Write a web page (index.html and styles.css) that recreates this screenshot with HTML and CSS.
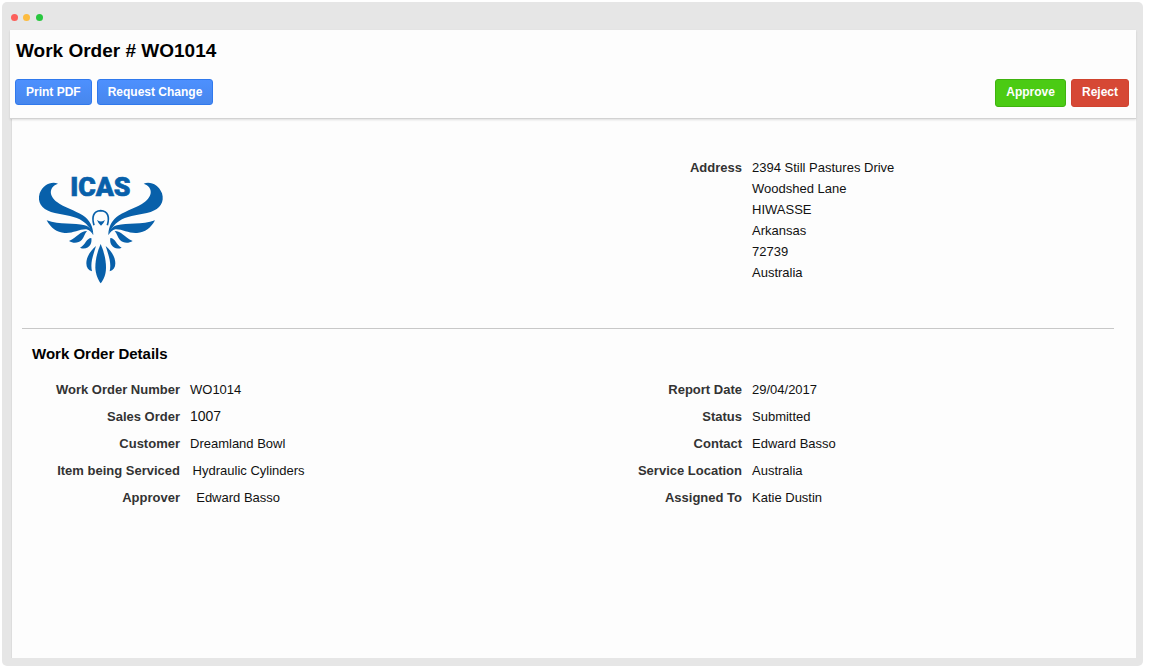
FILE: index.html
```html
<!DOCTYPE html>
<html lang="en">
<head>
<meta charset="UTF-8" />
<meta name="viewport" content="width=device-width, initial-scale=1" />
<title>Work Order # WO1014</title>
<link rel="stylesheet" href="styles.css">
</head>
<body>
  <div class="window">
    <div class="titlebar">
      <span class="dot dot-red"></span>
      <span class="dot dot-yellow"></span>
      <span class="dot dot-green"></span>
    </div>

    <header class="header">
      <h1>Work Order # WO1014</h1>
      <div class="toolbar">
        <button type="button" class="btn btn-blue">Print PDF</button>
        <button type="button" class="btn btn-blue">Request Change</button>
        <button type="button" class="btn btn-green">Approve</button>
        <button type="button" class="btn btn-red">Reject</button>
      </div>
    </header>

    <main class="content">
      <section class="columns summary">
        <svg class="logo" viewBox="0 0 450 390" role="img" aria-label="ICAS">
          <text class="logo-text" x="226" y="94" text-anchor="middle">ICAS</text>
          <g id="wing">
            <path d="M99 56C78 48 54 60 44 85C36 112 50 132 78 141C108 150 142 151 164 163C184 174 195 188 205 209C204 184 194 165 173 151C150 136 117 127 96 111C73 94 69 67 99 56Z" />
            <path d="M65 166C77 189 95 202 119 204C143 206 163 192 184 193C193 194 199 202 205 211C202 195 193 185 179 181C148 173 104 181 65 166Z" />
            <path d="M186 198C166 198 158 216 132 228C145 236 160 235 170 225C178 217 178 206 186 198Z" />
            <path d="M199 219C184 219 182 240 165 248C178 254 190 249 196 239C200 232 200 225 199 219Z" />
            <path d="M213 243C196 258 184 276 184 295C184 308 190 316 201 319C195 292 205 270 213 243Z" />
          </g>
          <use href="#wing" transform="matrix(-1 0 0 1 455 0)" />
          <path d="M227 237C216 262 211 286 211 308C212 329 219 343 227 355C236 343 243 329 243 308C243 286 238 262 227 237Z" />
          <path d="M216 165Q223 170 228 169Q233 170 240 165Q236 176 228 182Q220 176 216 165Z" />
          <path class="logo-head" d="M207 181C200 157 204 138 227 137C250 138 254 157 247 181" />
        </svg>
        <dl class="fields">
          <dt>Address</dt>
          <dd class="address">
            2394 Still Pastures Drive<br>
            Woodshed Lane<br>
            HIWASSE<br>
            Arkansas<br>
            72739<br>
            Australia
          </dd>
        </dl>
      </section>

      <hr class="divider">

      <h2>Work Order Details</h2>
      <section class="columns">
        <dl class="fields">
          <dt>Work Order Number</dt>
          <dd>WO1014</dd>
          <dt>Sales Order</dt>
          <dd class="large">1007</dd>
          <dt>Customer</dt>
          <dd>Dreamland Bowl</dd>
          <dt>Item being Serviced</dt>
          <dd>&thinsp;Hydraulic Cylinders</dd>
          <dt>Approver</dt>
          <dd>&nbsp;&thinsp;Edward Basso</dd>
        </dl>
        <dl class="fields">
          <dt>Report Date</dt>
          <dd>29/04/2017</dd>
          <dt>Status</dt>
          <dd>Submitted</dd>
          <dt>Contact</dt>
          <dd>Edward Basso</dd>
          <dt>Service Location</dt>
          <dd>Australia</dd>
          <dt>Assigned To</dt>
          <dd>Katie Dustin</dd>
        </dl>
      </section>
    </main>
  </div>
</body>
</html>
```

FILE: styles.css
```css
* {
  box-sizing: border-box;
}
body {
  background: #ffffff;
  color: #111111;
  font-family: "Liberation Sans", Arial, sans-serif;
  font-size: 13px;
  display: flex;
  min-height: 100vh;
  margin: 0;
  padding: 2px 7px 4px 2px;
}
.window {
  flex: 1;
  display: flex;
  flex-direction: column;
  background: #e6e6e6;
  border-radius: 5px;
  padding: 0 7px 8px 8px;
}
.titlebar {
  display: flex;
  align-items: center;
  gap: 5px;
  height: 28px;
  padding: 3px 0 0 1px;
}
.dot {
  width: 7px;
  height: 7px;
  border-radius: 50%;
}
.dot-red {
  background: #fc605b;
}
.dot-yellow {
  background: #fdbc40;
  margin-right: 1px;
}
.dot-green {
  background: #28c73f;
}
.header {
  position: relative;
  background: #fdfdfd;
  border-bottom: 1px solid #d2d2d2;
  box-shadow: 0 1px 2px rgba(0,0,0,0.12);
  padding: 8px 7px 11px 5px;
}
h1 {
  margin: 0 0 15px 1px;
  color: #000000;
  font-size: 19px;
  line-height: 26px;
}
.toolbar {
  display: flex;
  align-items: flex-start;
  gap: 5px;
}
.btn {
  height: 26px;
  padding: 0 10px;
  border: 1px solid #3079ed;
  border-radius: 3px;
  color: #ffffff;
  font-family: inherit;
  font-size: 12px;
  font-weight: 700;
  cursor: pointer;
}
.btn-blue {
  background: linear-gradient(#4d90fe, #4787ed);
}
.btn-green {
  height: 28px;
  margin-left: auto;
  padding-bottom: 2px;
  background: #4bcb14;
  border-color: #3fb30f;
}
.btn-red {
  height: 28px;
  padding-bottom: 2px;
  background: #d64835;
  border-color: #d0432f;
}
.content {
  flex: 1;
  background: #fdfdfd;
  border-left: 1px solid #dddddd;
  margin-left: 1px;
}
.columns {
  display: grid;
  grid-template-columns: 1fr 1fr;
}
.summary {
  padding: 38px 0 33px;
}
.logo {
  width: 150px;
  height: 130px;
  margin: 8px 0 0 13px;
  fill: #0860aa;
}
.logo-text {
  font-family: Roboto, sans-serif;
  font-size: 80px;
  font-weight: 900;
  stroke: #0860aa;
  stroke-width: 2;
}
.logo-head {
  fill: none;
  stroke: #0860aa;
  stroke-width: 5;
}
.fields {
  display: grid;
  grid-template-columns: 168px 1fr;
  column-gap: 10px;
  align-content: start;
  margin: 0;
  line-height: 27px;
}
dt {
  color: #333333;
  font-weight: 700;
  text-align: right;
}
.fields dd {
  margin: 0;
}
.fields .large {
  font-size: 14px;
}
.summary .fields {
  line-height: 21px;
}
.divider {
  height: 1px;
  margin: 0 22px 0 10px;
  border: none;
  background: #c8c8c8;
}
h2 {
  margin: 15px 0 12px 20px;
  color: #000000;
  font-size: 15px;
  line-height: 20px;
}
```
